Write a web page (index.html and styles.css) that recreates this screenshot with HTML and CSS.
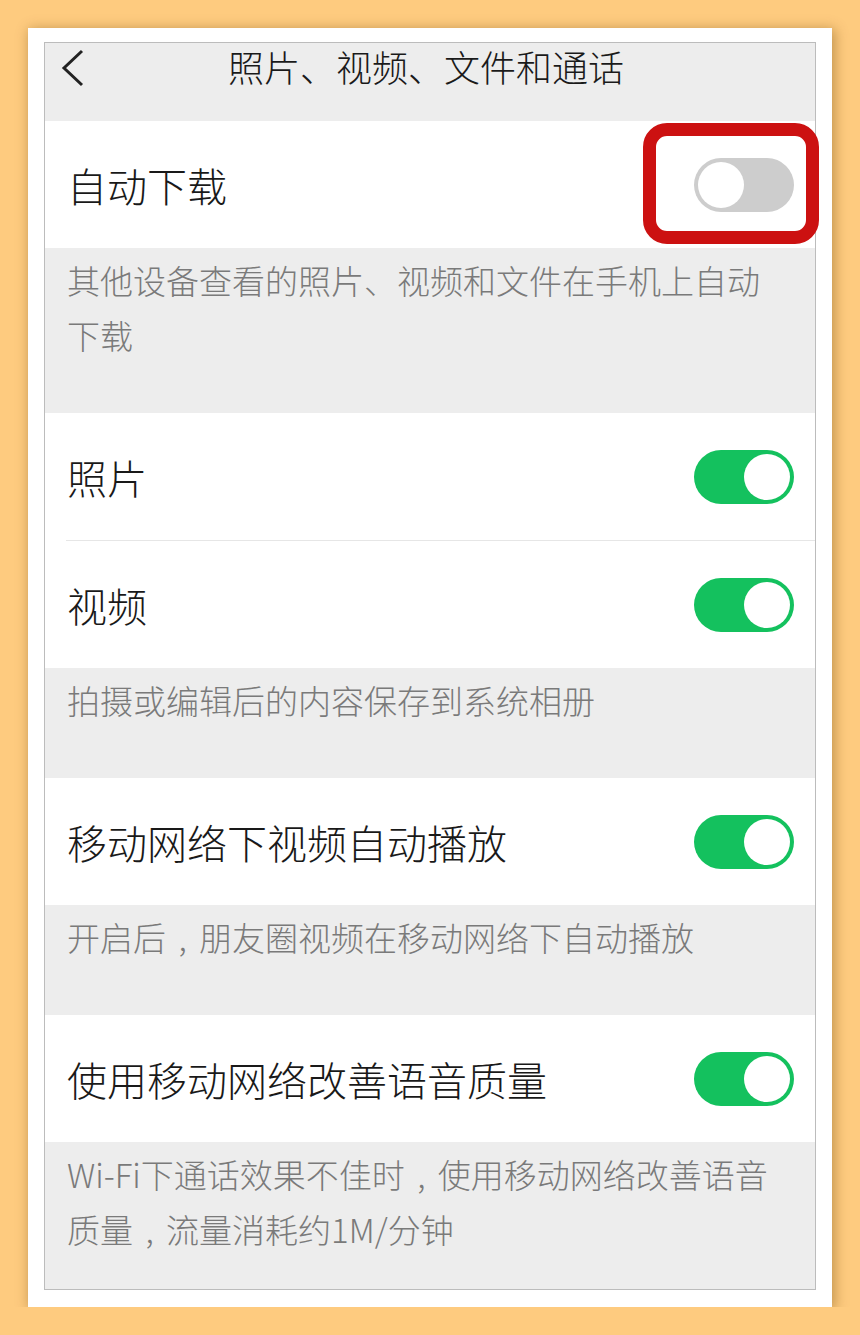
FILE: index.html
```html
<!DOCTYPE html>
<html lang="zh-CN">

<head>
    <meta charset="UTF-8">
    <title>照片、视频、文件和通话</title>
    <link rel="stylesheet" href="styles.css">
</head>

<body>
    <div class="frame">
        <div class="screen">
            <!-- 顶部标题栏 -->
            <div class="header">
                <svg class="back" width="24" height="38" viewBox="0 0 24 38">
                    <polyline points="21,2 3,19 21,36" fill="none" stroke="#222" stroke-width="3" />
                </svg>
                <div class="title">照片、视频、文件和通话</div>
            </div>

            <div class="row">
                <span class="label">自动下载</span>
                <span class="switch"><i class="knob"></i></span>
            </div>
            <div class="desc">其他设备查看的照片、视频和文件在手机上自动下载</div>

            <div class="row">
                <span class="label">照片</span>
                <span class="switch on"><i class="knob"></i></span>
            </div>
            <div class="sep"></div>
            <div class="row">
                <span class="label">视频</span>
                <span class="switch on"><i class="knob"></i></span>
            </div>
            <div class="desc">拍摄或编辑后的内容保存到系统相册</div>

            <div class="row">
                <span class="label">移动网络下视频自动播放</span>
                <span class="switch on"><i class="knob"></i></span>
            </div>
            <div class="desc">开启后<span class="p">,</span>朋友圈视频在移动网络下自动播放</div>

            <div class="row">
                <span class="label">使用移动网络改善语音质量</span>
                <span class="switch on"><i class="knob"></i></span>
            </div>
            <div class="desc">Wi-Fi下通话效果不佳时<span class="p">,</span>使用移动网络改善语音<br>质量<span class="p">,</span>流量消耗约1M/分钟</div>
        </div>
        <!-- 红色标注框 -->
        <div class="mark"></div>
    </div>
</body>

</html>
```

FILE: styles.css
```css
* {
    padding: 0;
    margin: 0;
    box-sizing: border-box;
}

body {
    background: #fecb7f;
    font-family: "Noto Sans CJK SC", "Noto Sans", sans-serif;
    font-weight: 300;
}

.frame {
    position: relative;
    width: 804px;
    margin: 28px 0 0 28px;
    padding: 14px 16px 17px 16px;
    background: #fff;
    box-shadow: 2px 2px 12px 1px rgba(120, 80, 20, 0.45);
}

.screen {
    width: 772px;
    border: 1px solid #bcbcbc;
    background: #ededed;
}

.header {
    height: 78px;
    display: flex;
    align-items: flex-start;
    position: relative;
}

.back {
    display: block;
    margin: 6px 0 0 16px;
}

.title {
    position: absolute;
    left: 0;
    right: 8px;
    top: 0;
    text-align: center;
    font-size: 36px;
    line-height: 46px;
    color: #1a1a1a;
}

.row {
    height: 127px;
    background: #fff;
    display: flex;
    align-items: center;
    justify-content: space-between;
    padding: 0 21px 0 22px;
}

.label {
    font-size: 40px;
    color: #191919;
}

.sep {
    height: 1px;
    background: #fff;
    padding-left: 21px;
}

.sep::before {
    content: "";
    display: block;
    height: 1px;
    background: #e6e6e6;
}

.desc {
    padding: 5px 30px 50px 22px;
    font-size: 33px;
    line-height: 55px;
    color: #7a7a7a;
}

.desc:last-child {
    padding-bottom: 32px;
}

/* 全角逗号居中显示 */
.desc .p {
    display: inline-block;
    width: 1em;
    text-align: center;
}

.switch {
    width: 100px;
    height: 54px;
    border-radius: 27px;
    background: #cdcdcd;
    padding: 4px;
    display: flex;
    justify-content: flex-start;
}

.switch.on {
    background: #14c15e;
    justify-content: flex-end;
}

.knob {
    width: 46px;
    height: 46px;
    border-radius: 50%;
    background: #fff;
}

.mark {
    position: absolute;
    left: 615px;
    top: 95px;
    width: 176px;
    height: 121px;
    border: 13px solid #cc1111;
    border-radius: 24px;
}
```
